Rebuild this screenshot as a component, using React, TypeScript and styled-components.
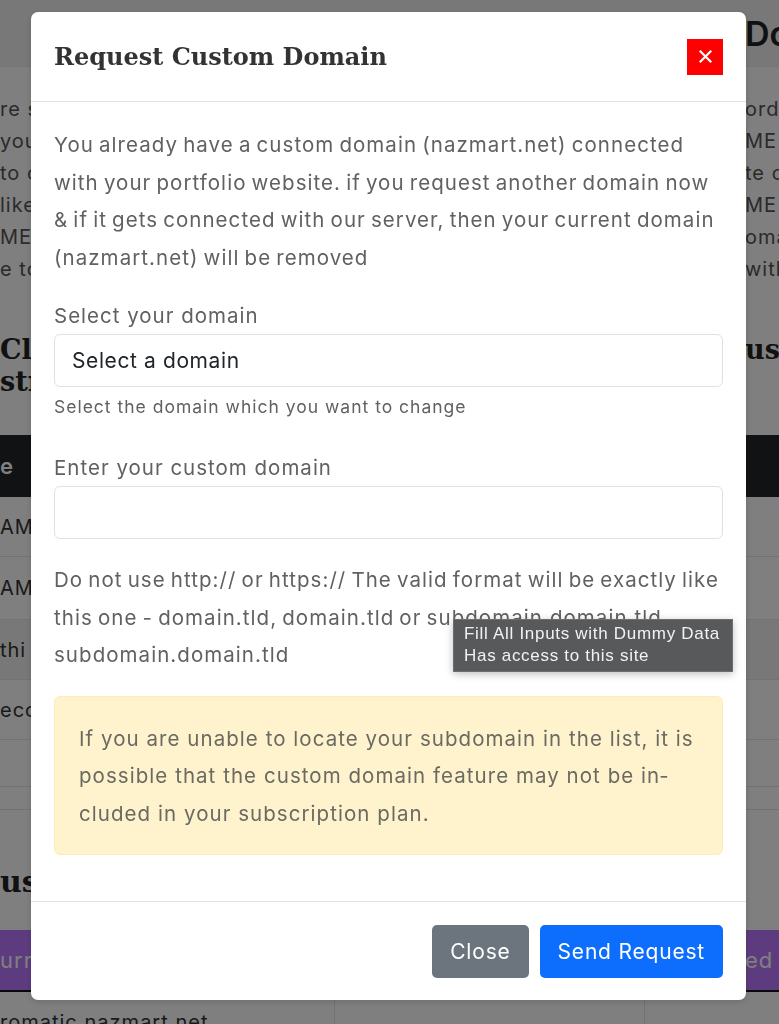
import React from 'react';
import styled, { createGlobalStyle } from 'styled-components';

const COLORS = {
  text: '#616161',
  dark: '#212529',
  border: '#dee2e6',
  muted: '#6c757d',
  primary: '#0d6efd',
  danger: '#ff0000',
  warningBg: '#fff3cd',
  warningBorder: '#ffecb5',
};

const BODY_FONT = '"Inter", "Open Sans", sans-serif';
const SLAB_FONT = '"DejaVu Serif", "Liberation Serif", serif';

const GlobalStyle = createGlobalStyle`
  html, body {
    margin: 0;
    padding: 0;
    height: 100%;
    overflow: hidden;
    background: #ffffff;
  }
  body {
    font-family: ${BODY_FONT};
    color: ${COLORS.text};
  }
  * { box-sizing: border-box; }
`;

// ============================================================================
// PAGE BEHIND THE MODAL
// ============================================================================

const Page = styled.div`
  width: 779px;
  height: 1024px;
  overflow: hidden;
  background: #ffffff;
`;

const PageHeader = styled.header`
  height: 67px;
  border-bottom: 1px solid #e9e9e9;
  background: #f0f0f0;
  display: grid;
  grid-template-columns: 745px 1fr;
  align-items: center;
`;

const PageTitle = styled.h2`
  grid-column: 2;
  margin: 0;
  font-family: ${BODY_FONT};
  font-size: 34px;
  font-weight: 600;
  color: #222;
  white-space: nowrap;
`;

const Columns = styled.div`
  display: grid;
  grid-template-columns: 745px 1fr;
  padding-top: 26px;
`;

const TextColumn = styled.div`
  font-size: 20px;
  letter-spacing: 1px;
  line-height: 32px;
  color: #555;
  white-space: nowrap;
  overflow: hidden;
`;

const SectionTitle = styled.h3`
  margin: 0;
  font-family: ${SLAB_FONT};
  font-size: 27px;
  font-weight: 700;
  line-height: 32px;
  color: #222;
  white-space: nowrap;
  overflow: hidden;
`;

const HeadingRow = styled.div`
  display: grid;
  grid-template-columns: 745px 1fr;
  padding-top: 49px;
  height: 150px;
`;

const Table = styled.div`
  display: flex;
  flex-direction: column;
`;

const TableHead = styled.div`
  height: 62px;
  background: #212529;
  color: #fff;
  font-size: 22px;
  font-weight: 600;
  display: flex;
  align-items: center;
`;

const TableRow = styled.div<{ $h: number; $striped?: boolean }>`
  height: ${({ $h }) => $h}px;
  border-bottom: 1px solid #e4e4e4;
  background: ${({ $striped }) => ($striped ? '#f0f0f0' : '#ffffff')};
  font-size: 20px;
  letter-spacing: 1px;
  color: #333;
  display: flex;
  align-items: center;
  white-space: nowrap;
  overflow: hidden;
`;

const LowerTitle = styled.div`
  height: 120px;
  padding-top: 22px;
  display: flex;
  align-items: center;
  font-family: ${SLAB_FONT};
  font-size: 30px;
  font-weight: 700;
  color: #222;
  white-space: nowrap;
`;

const PurpleBar = styled.div`
  height: 62px;
  background: #bb77ff;
  border-bottom: 2px solid #111;
  display: grid;
  grid-template-columns: 745px 1fr;
  align-items: center;
  color: #fff;
  font-size: 22px;
  letter-spacing: 1px;
  white-space: nowrap;
  overflow: hidden;
`;

const BottomRow = styled.div`
  display: grid;
  grid-template-columns: 335px 310px 1fr;
  height: 60px;
  font-size: 20px;
  letter-spacing: 1px;
  color: #333;
`;

const BottomCell = styled.div`
  border-right: 1px solid #e4e4e4;
  padding-top: 18px;
  white-space: nowrap;
  overflow: hidden;
`;

// ============================================================================
// MODAL
// ============================================================================

const Backdrop = styled.div`
  position: fixed;
  inset: 0;
  background: rgba(0, 0, 0, 0.5);
  padding: 12px 0 0 31px;
`;

const Dialog = styled.div`
  position: relative;
  width: 715px;
  background: #ffffff;
  border-radius: 7px;
  box-shadow: 0 2px 6px rgba(0, 0, 0, 0.15);
`;

const Header = styled.div`
  height: 90px;
  display: flex;
  align-items: center;
  justify-content: space-between;
  padding: 0 23px;
  border-bottom: 1px solid ${COLORS.border};
`;

const Title = styled.h5`
  margin: 0;
  font-family: ${SLAB_FONT};
  font-size: 24px;
  font-weight: 600;
  color: #333333;
`;

const CloseX = styled.button`
  width: 36px;
  height: 36px;
  border: none;
  padding: 0;
  background: ${COLORS.danger};
  display: flex;
  align-items: center;
  justify-content: center;
  cursor: pointer;
`;

const Body = styled.div`
  padding: 24px 23px 46px;
`;

const Paragraph = styled.p<{ $last?: boolean }>`
  margin: 0 0 ${({ $last }) => ($last ? 0 : 21)}px;
  font-size: 20.5px;
  letter-spacing: 1.05px;
  word-spacing: -1.7px;
  line-height: 37.5px;
  color: ${COLORS.text};
`;

const Label = styled.label`
  display: block;
  font-size: 20.5px;
  letter-spacing: 1px;
  line-height: 37px;
  color: ${COLORS.text};
`;

const Field = styled.div`
  width: 100%;
  height: 53px;
  border: 1px solid ${COLORS.border};
  border-radius: 6px;
  padding: 0 17px;
  display: flex;
  align-items: center;
  font-size: 21px;
  letter-spacing: 0.6px;
  color: ${COLORS.dark};
  background: #ffffff;
`;

const HelpText = styled.div`
  margin-top: 6px;
  font-size: 17.5px;
  letter-spacing: 1px;
  line-height: 28px;
  color: ${COLORS.text};
`;

const Group = styled.div<{ $gap: number }>`
  margin-top: ${({ $gap }) => $gap}px;
`;

const Alert = styled.div`
  margin-top: 22px;
  padding: 23px 24px 22px;
  background: ${COLORS.warningBg};
  border: 1px solid ${COLORS.warningBorder};
  border-radius: 6px;
  font-size: 20.5px;
  letter-spacing: 1.05px;
  line-height: 37.5px;
  color: #6a6a62;
`;

const Footer = styled.div`
  display: flex;
  justify-content: flex-end;
  gap: 11px;
  padding: 23px 23px 22px;
  border-top: 1px solid ${COLORS.border};
`;

const Button = styled.button<{ $variant: 'secondary' | 'primary' }>`
  height: 53px;
  padding: 0 18px;
  border: none;
  border-radius: 5px;
  font-family: ${BODY_FONT};
  font-size: 21px;
  letter-spacing: 0.8px;
  color: #ffffff;
  background: ${({ $variant }) => ($variant === 'primary' ? COLORS.primary : COLORS.muted)};
  cursor: pointer;
`;

const Tooltip = styled.div`
  position: absolute;
  left: 422px;
  top: 607px;
  width: 280px;
  padding: 3px 10px 4px;
  background: #58595b;
  border: 1px solid #6e6e6e;
  box-shadow: 0 2px 8px rgba(0, 0, 0, 0.25);
  font-family: "Liberation Sans", Arial, sans-serif;
  font-size: 17px;
  letter-spacing: 0.7px;
  line-height: 22px;
  color: #f2f2f2;
  white-space: nowrap;
`;

export default function App() {
  return (
    <>
      <GlobalStyle />
      <Page>
        <PageHeader>
          <PageTitle>Domain</PageTitle>
        </PageHeader>
        <Columns>
          <TextColumn>
            <div>re sure your</div>
            <div>your domain</div>
            <div>to configure</div>
            <div>like this</div>
            <div>ME record</div>
            <div>e to wait</div>
          </TextColumn>
          <TextColumn>
            <div>ords</div>
            <div>ME rec</div>
            <div>te con</div>
            <div>ME</div>
            <div>omain</div>
            <div>with</div>
          </TextColumn>
        </Columns>
        <HeadingRow>
          <div>
            <SectionTitle>Cl</SectionTitle>
            <SectionTitle>str</SectionTitle>
          </div>
          <SectionTitle>ust</SectionTitle>
        </HeadingRow>
        <Table>
          <TableHead>e</TableHead>
          <TableRow $h={60}>AME</TableRow>
          <TableRow $h={63}>AME</TableRow>
          <TableRow $h={60} $striped>thi</TableRow>
          <TableRow $h={60}>eco</TableRow>
          <TableRow $h={47}></TableRow>
          <TableRow $h={23}></TableRow>
        </Table>
        <LowerTitle>ust</LowerTitle>
        <PurpleBar>
          <span>urr</span>
          <span>ed</span>
        </PurpleBar>
        <BottomRow>
          <BottomCell>romatic.nazmart.net</BottomCell>
          <BottomCell />
          <div />
        </BottomRow>
      </Page>

      <Backdrop>
        <Dialog role="dialog">
          <Header>
            <Title>Request Custom Domain</Title>
            <CloseX aria-label="Close">
              <svg width="13" height="13" viewBox="0 0 13 13">
                <path d="M1.5 1.5 L11.5 11.5 M11.5 1.5 L1.5 11.5" stroke="#fff" strokeWidth="2.2" strokeLinecap="square" />
              </svg>
            </CloseX>
          </Header>
          <Body>
            <Paragraph>
              You already have a custom domain (nazmart.net) connected with your portfolio website. if you
              request another domain now &amp; if it gets connected with our server, then your current domain
              (nazmart.net) will be removed
            </Paragraph>
            <Label>Select your domain</Label>
            <Field>Select a domain</Field>
            <HelpText>Select the domain which you want to change</HelpText>
            <Group $gap={28}>
              <Label>Enter your custom domain</Label>
              <Field />
            </Group>
            <Group $gap={22}>
              <Paragraph $last>
                Do not use http:// or https:// The valid format will be exactly like this one - domain.tld,
                domain.tld or subdomain.domain.tld subdomain.domain.tld
              </Paragraph>
            </Group>
            <Alert>
              If you are unable to locate your subdomain in the list, it is possible that the custom domain
              feature may not be in{'\u00AD'}cluded in your subscription plan.
            </Alert>
          </Body>
          <Footer>
            <Button $variant="secondary">Close</Button>
            <Button $variant="primary">Send Request</Button>
          </Footer>
          <Tooltip>
            Fill All Inputs with Dummy Data
            <br />
            Has access to this site
          </Tooltip>
        </Dialog>
      </Backdrop>
    </>
  );
}
